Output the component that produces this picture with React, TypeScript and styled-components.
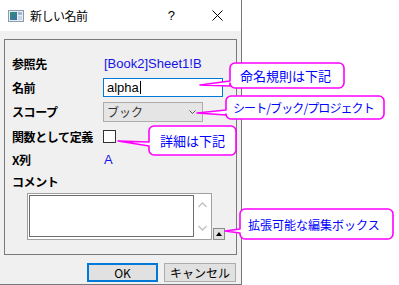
import React from "react";
import styled, { createGlobalStyle } from "styled-components";

const Global = createGlobalStyle`
  html, body { margin: 0; padding: 0; background: #ffffff; }
  body { font-family: "Liberation Sans", "Noto Sans CJK JP", sans-serif; font-size: 12px; color: #000; }
  * { box-sizing: border-box; }
`;

const Page = styled.div`
  position: relative;
  width: 399px;
  height: 285px;
  background: #ffffff;
  overflow: hidden;
`;

const Window = styled.div`
  width: 242px;
  height: 285px;
  display: flex;
  flex-direction: column;
  border-right: 1px solid #777777;
  border-bottom: 1px solid #777777;
`;

const TitleBar = styled.div`
  height: 31px;
  background: #ffffff;
  display: flex;
  align-items: center;
  padding-left: 8px;
  flex-shrink: 0;
`;

const Title = styled.span`
  margin-left: 6px;
  font-family: "Noto Sans CJK JP", sans-serif;
  font-size: 12px;
  letter-spacing: -0.5px;
  color: #000;
  flex: 1;
`;

const Help = styled.span`
  font-family: "Liberation Sans", sans-serif;
  font-size: 13px;
  margin-right: 37px;
`;

const CloseIcon = styled.svg`
  width: 11px;
  height: 11px;
  margin-right: 18px;
`;

const Body = styled.div`
  flex: 1;
  background: #f0f0f0;
  padding: 8px 4px 0 4px;
  display: flex;
  flex-direction: column;
`;

const Group = styled.div`
  height: 216px;
  border: 1px solid #7a7a7a;
  padding: 11px 0 0 7px;
  display: flex;
  flex-direction: column;
`;

const Row = styled.div<{ $h: number }>`
  height: ${(p) => p.$h}px;
  display: flex;
  align-items: center;
`;

const Label = styled.span`
  width: 91px;
  flex-shrink: 0;
  font-family: "Noto Sans CJK JP", sans-serif;
  font-weight: 700;
  font-size: 12px;
  letter-spacing: -0.4px;
`;

const Value = styled.span`
  color: #1414e6;
  font-size: 13px;
  padding-left: 1px;
`;

const TextInput = styled.div`
  width: 120px;
  height: 19px;
  background: #fff;
  border: 1px solid #0078d7;
  display: flex;
  align-items: center;
  padding-left: 3px;
  font-size: 13px;
`;

const Caret = styled.span`
  display: inline-block;
  width: 1px;
  height: 13px;
  background: #000;
  margin-left: 1px;
`;

const Combo = styled.div`
  width: 100px;
  height: 20px;
  background: #e5e5e5;
  border: 1px solid #adadad;
  display: flex;
  align-items: center;
  justify-content: space-between;
  padding: 0 6px 0 3px;
  font-family: "Noto Sans CJK JP", sans-serif;
  font-size: 12px;
  color: #333;
`;

const Check = styled.div`
  width: 13px;
  height: 13px;
  border: 1px solid #333;
  background: #fff;
`;

const CommentWrap = styled.div`
  margin-top: 1px;
  margin-left: 15px;
  display: flex;
  align-items: flex-end;
`;

const CommentBox = styled.div`
  width: 185px;
  height: 47px;
  border: 1px solid #a0a0a0;
  background: #fff;
  padding: 1px;
  display: flex;
`;

const CommentArea = styled.div`
  width: 165px;
  height: 42px;
  border: 1px solid #6d6d6d;
  background: #fff;
`;

const ScrollCol = styled.div`
  flex: 1;
  display: flex;
  flex-direction: column;
  align-items: center;
  justify-content: space-between;
  padding: 7px 0 7px 0;
`;

const Chevron = styled.svg`
  width: 9px;
  height: 6px;
`;

const ExpandBtn = styled.div`
  width: 12px;
  height: 12px;
  margin-left: 1px;
  background: #e1e1e1;
  border: 1px solid #8c8c8c;
  display: flex;
  align-items: center;
  justify-content: center;
`;

const ButtonRow = styled.div`
  display: flex;
  justify-content: flex-end;
  gap: 6px;
  margin-top: 8px;
  padding-right: 1px;
`;

const Button = styled.div<{ $primary?: boolean; $w: number }>`
  width: ${(p) => p.$w}px;
  height: 19px;
  background: #e1e1e1;
  border: ${(p) => (p.$primary ? "2px solid #0078d7" : "1px solid #adadad")};
  display: flex;
  align-items: center;
  justify-content: center;
  font-family: "Noto Sans CJK JP", sans-serif;
  font-size: 12px;
  color: #000;
`;

const CalloutBox = styled.div<{ $x: number; $y: number; $w: number; $h: number; $pad: number; $fs: number; $ls: number }>`
  position: absolute;
  left: ${(p) => p.$x}px;
  top: ${(p) => p.$y}px;
  width: ${(p) => p.$w}px;
  height: ${(p) => p.$h}px;
  display: flex;
  align-items: center;
  padding-left: ${(p) => p.$pad}px;
  font-family: "Noto Sans CJK JP", sans-serif;
  font-size: ${(p) => p.$fs}px;
  letter-spacing: ${(p) => p.$ls}px;
  color: #0000ff;
  white-space: nowrap;
`;

const CalloutFrame = styled.svg`
  position: absolute;
  left: 0;
  top: 0;
  overflow: visible;
`;

const CalloutText = styled.span`
  position: relative;
`;

type CalloutProps = {
  x: number; y: number; w: number; h: number;
  tipX: number; tipY: number; y1: number; y2: number;
  pad: number; fs?: number; ls?: number; children: React.ReactNode;
};

function Callout({ x, y, w, h, tipX, tipY, y1, y2, pad, fs = 13, ls = 0, children }: CalloutProps) {
  const r = 5;
  const tx = tipX - x;
  const ty = tipY - y;
  const a = y1 - y;
  const b = y2 - y;
  const d = `M ${r} 0 H ${w - r} A ${r} ${r} 0 0 1 ${w} ${r} V ${h - r} A ${r} ${r} 0 0 1 ${w - r} ${h} H ${r} A ${r} ${r} 0 0 1 0 ${h - r} V ${b} L ${tx} ${ty} L 0 ${a} V ${r} A ${r} ${r} 0 0 1 ${r} 0 Z`;
  return (
    <CalloutBox $x={x} $y={y} $w={w} $h={h} $pad={pad} $fs={fs} $ls={ls}>
      <CalloutFrame width={w} height={h}>
        <path d={d} fill="#ffffff" stroke="#ff00ff" strokeWidth={1.6} strokeLinejoin="round" />
      </CalloutFrame>
      <CalloutText>{children}</CalloutText>
    </CalloutBox>
  );
}

function AppIcon() {
  return (
    <svg width="16" height="12" viewBox="0 0 16 12">
      <defs>
        <linearGradient id="ig" x1="0" y1="0" x2="1" y2="1">
          <stop offset="0" stopColor="#2f8f6f" />
          <stop offset="1" stopColor="#3f6fb0" />
        </linearGradient>
      </defs>
      <rect x="0.5" y="0.5" width="15" height="11" fill="#e8eef4" stroke="#8a9aa8" />
      <rect x="2" y="2" width="7" height="8" fill="url(#ig)" />
      <rect x="10" y="2" width="4" height="3" fill="#9fb8d0" />
      <rect x="10" y="6" width="4" height="4" fill="#c9d6e2" />
    </svg>
  );
}

export default function App() {
  return (
    <Page>
      <Global />
      <Window>
        <TitleBar>
          <AppIcon />
          <Title>新しい名前</Title>
          <Help>?</Help>
          <CloseIcon viewBox="0 0 11 11">
            <path d="M0.5 0.5 L10.5 10.5 M10.5 0.5 L0.5 10.5" stroke="#000" strokeWidth="1" />
          </CloseIcon>
        </TitleBar>
        <Body>
          <Group>
            <Row $h={24}>
              <Label>参照先</Label>
              <Value>[Book2]Sheet1!B</Value>
            </Row>
            <Row $h={24}>
              <Label>名前</Label>
              <TextInput>
                alpha<Caret />
              </TextInput>
            </Row>
            <Row $h={25}>
              <Label>スコープ</Label>
              <Combo>
                <span>ブック</span>
                <svg width="7" height="4" viewBox="0 0 7 4">
                  <path d="M0.5 0.5 L3.5 3.5 L6.5 0.5" fill="none" stroke="#555" strokeWidth="1" />
                </svg>
              </Combo>
            </Row>
            <Row $h={24}>
              <Label>関数として定義</Label>
              <Check />
            </Row>
            <Row $h={22}>
              <Label>X列</Label>
              <Value>A</Value>
            </Row>
            <Row $h={22}>
              <Label>コメント</Label>
            </Row>
            <CommentWrap>
              <CommentBox>
                <CommentArea />
                <ScrollCol>
                  <Chevron viewBox="0 0 9 6">
                    <path d="M0.5 5 L4.5 1 L8.5 5" fill="none" stroke="#c0c0c0" strokeWidth="1.3" />
                  </Chevron>
                  <Chevron viewBox="0 0 9 6">
                    <path d="M0.5 1 L4.5 5 L8.5 1" fill="none" stroke="#c0c0c0" strokeWidth="1.3" />
                  </Chevron>
                </ScrollCol>
              </CommentBox>
              <ExpandBtn>
                <svg width="6" height="4" viewBox="0 0 6 4">
                  <path d="M0 4 L3 0 L6 4 Z" fill="#000" />
                </svg>
              </ExpandBtn>
            </CommentWrap>
          </Group>
          <ButtonRow>
            <Button $primary $w={71}>OK</Button>
            <Button $w={72}>キャンセル</Button>
          </ButtonRow>
        </Body>
      </Window>

      <Callout x={230} y={63} w={114} h={25} tipX={200} tipY={85} y1={81} y2={86} pad={10}>
        命名規則は下記
      </Callout>
      <Callout x={226} y={96} w={158} h={23} tipX={197} tipY={113} y1={110} y2={115} pad={7} fs={12} ls={-0.9}>
        シート/ブック/プロジェクト
      </Callout>
      <Callout x={149} y={126} w={87} h={29} tipX={118} tipY={141} y1={142} y2={146} pad={11}>
        詳細は下記
      </Callout>
      <Callout x={240} y={209} w={153} h={30} tipX={225} tipY={231} y1={229} y2={233} pad={8} fs={12}>
        拡張可能な編集ボックス
      </Callout>
    </Page>
  );
}
